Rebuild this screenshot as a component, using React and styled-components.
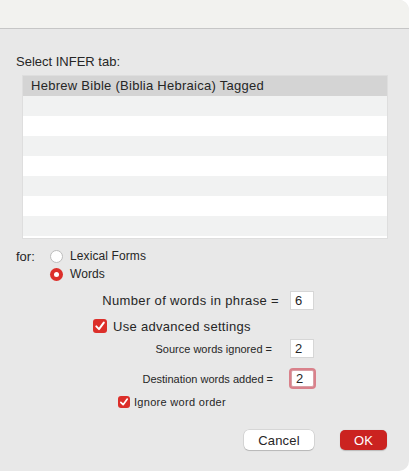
import React from "react";
import styled, { createGlobalStyle } from "styled-components";

const Global = createGlobalStyle`
  html, body { margin: 0; padding: 0; background: #ffffff; }
  body { font-family: "Liberation Sans", Arial, sans-serif; color: #262626; }
  * { box-sizing: border-box; }
`;

const Window = styled.div`
  width: 409px;
  height: 471px;
  background: #e8e8e8;
  border-radius: 0 10px 10px 0;
  overflow: hidden;
  display: flex;
  flex-direction: column;
`;

const TitleBar = styled.div`
  height: 29px;
  flex: none;
  background: #f2f2ef;
  border-bottom: 1px solid #c6c6c6;
`;

const Content = styled.div`
  padding: 25px 22px 0 16px;
  display: flex;
  flex-direction: column;
  font-size: 13px;
`;

const Heading = styled.div`
  line-height: 16px;
  height: 16px;
`;

const List = styled.div`
  margin: 6px 0 0 7px;
  width: 364px;
  height: 162px;
  background: #ffffff;
  box-shadow: 0 0 0 1px rgba(0, 0, 0, 0.04);
  display: flex;
  flex-direction: column;
`;

const ListRow = styled.div`
  height: 20px;
  flex: none;
  padding-left: 8px;
  line-height: 20px;
  font-size: 13px;
  letter-spacing: 0.27px;
  background: ${(p) => (p.$selected ? "#d4d4d4" : p.$alt ? "#f1f2f2" : "#ffffff")};
`;

const ForRow = styled.div`
  margin-top: 9px;
  display: flex;
  align-items: flex-start;
`;

const ForLabel = styled.div`
  width: 34px;
  line-height: 18px;
  height: 18px;
  padding-top: 1px;
`;

const RadioGroup = styled.div`
  display: flex;
  flex-direction: column;
`;

const RadioOption = styled.div`
  height: 18px;
  display: flex;
  align-items: center;
  font-size: 12px;
  letter-spacing: 0.1px;
`;

const RadioDot = styled.span`
  width: 13px;
  height: 13px;
  border-radius: 50%;
  margin-right: 7px;
  flex: none;
  display: flex;
  align-items: center;
  justify-content: center;
  background: ${(p) => (p.$checked ? "#dc2f2a" : "#ffffff")};
  border: ${(p) => (p.$checked ? "none" : "1px solid #bdbdbd")};
  &::after {
    content: "";
    display: ${(p) => (p.$checked ? "block" : "none")};
    width: 5px;
    height: 5px;
    border-radius: 50%;
    background: #ffffff;
  }
`;

const FieldRow = styled.div`
  width: 298px;
  height: ${(p) => p.$h || 19}px;
  margin-top: ${(p) => p.$mt || 0}px;
  display: flex;
  align-items: center;
  justify-content: flex-end;
`;

const FieldLabel = styled.span`
  font-size: ${(p) => (p.$small ? 11 : 13)}px;
  letter-spacing: ${(p) => (p.$small ? 0 : 0.35)}px;
  margin-right: ${(p) => p.$gap}px;
  white-space: nowrap;
`;

const NumBox = styled.div`
  width: 24px;
  height: 19px;
  background: #ffffff;
  border: 1px solid #d6d6d6;
  font-size: 13px;
  line-height: 17px;
  padding-left: 4px;
  ${(p) =>
    p.$focused &&
    `
    height: 17px;
    line-height: 15px;
    width: 23px;
    border: 1px solid #d9a0a6;
    box-shadow: 0 0 0 2px rgba(214, 110, 122, 0.85);
    border-radius: 2px;
  `}
`;

const CheckRow = styled.div`
  margin-top: ${(p) => p.$mt}px;
  padding-left: ${(p) => p.$indent}px;
  height: 16px;
  display: flex;
  align-items: center;
  font-size: ${(p) => (p.$small ? 11 : 13)}px;
  letter-spacing: ${(p) => (p.$small ? 0.3 : 0.3)}px;
`;

const CheckBox = styled.span`
  width: ${(p) => (p.$small ? 12 : 14)}px;
  height: ${(p) => (p.$small ? 12 : 14)}px;
  border-radius: 3px;
  background: #dc2f2a;
  margin-right: ${(p) => (p.$small ? 4 : 6)}px;
  flex: none;
  display: flex;
  align-items: center;
  justify-content: center;
`;

const Buttons = styled.div`
  margin-top: 20px;
  display: flex;
  justify-content: flex-end;
  gap: 26px;
`;

const Button = styled.button`
  height: 20px;
  width: ${(p) => p.$w}px;
  border-radius: 5px;
  font-family: "Liberation Sans", Arial, sans-serif;
  font-size: 13px;
  letter-spacing: 0.2px;
  padding: 0;
  border: none;
  color: ${(p) => (p.$primary ? "#ffffff" : "#262626")};
  background: ${(p) => (p.$primary ? "#cb2320" : "#ffffff")};
  box-shadow: ${(p) =>
    p.$primary
      ? "0 0.5px 1px rgba(0,0,0,0.2)"
      : "0 0 0 0.5px rgba(0,0,0,0.15), 0 1px 1px rgba(0,0,0,0.15)"};
`;

const Check = ({ size }) => (
  <svg width={size} height={size} viewBox="0 0 14 14">
    <path
      d="M3.3 7.4 L6 10.1 L10.8 3.6"
      fill="none"
      stroke="#ffffff"
      strokeWidth="2"
      strokeLinecap="round"
      strokeLinejoin="round"
    />
  </svg>
);

export default function App() {
  const rows = [];
  for (let i = 0; i < 8; i++) {
    rows.push(
      <ListRow key={i} $selected={i === 0} $alt={i % 2 === 1}>
        {i === 0 ? "Hebrew Bible (Biblia Hebraica) Tagged" : ""}
      </ListRow>
    );
  }
  return (
    <>
      <Global />
      <Window>
        <TitleBar />
        <Content>
          <Heading>Select INFER tab:</Heading>
          <List>{rows}</List>
          <ForRow>
            <ForLabel>for:</ForLabel>
            <RadioGroup>
              <RadioOption>
                <RadioDot />
                Lexical Forms
              </RadioOption>
              <RadioOption>
                <RadioDot $checked />
                Words
              </RadioOption>
            </RadioGroup>
          </ForRow>
          <FieldRow $mt={8}>
            <FieldLabel $gap={11}>Number of words in phrase =</FieldLabel>
            <NumBox>6</NumBox>
          </FieldRow>
          <CheckRow $mt={8} $indent={77}>
            <CheckBox>
              <Check size={14} />
            </CheckBox>
            Use advanced settings
          </CheckRow>
          <FieldRow $mt={5} $h={19}>
            <FieldLabel $small $gap={18}>Source words ignored =</FieldLabel>
            <NumBox>2</NumBox>
          </FieldRow>
          <FieldRow $mt={11} $h={19}>
            <FieldLabel $small $gap={18}>Destination words added =</FieldLabel>
            <NumBox $focused>2</NumBox>
          </FieldRow>
          <CheckRow $mt={6} $indent={102} $small>
            <CheckBox $small>
              <Check size={12} />
            </CheckBox>
            Ignore word order
          </CheckRow>
          <Buttons>
            <Button $w={70}>Cancel</Button>
            <Button $w={47} $primary>
              OK
            </Button>
          </Buttons>
        </Content>
      </Window>
    </>
  );
}
